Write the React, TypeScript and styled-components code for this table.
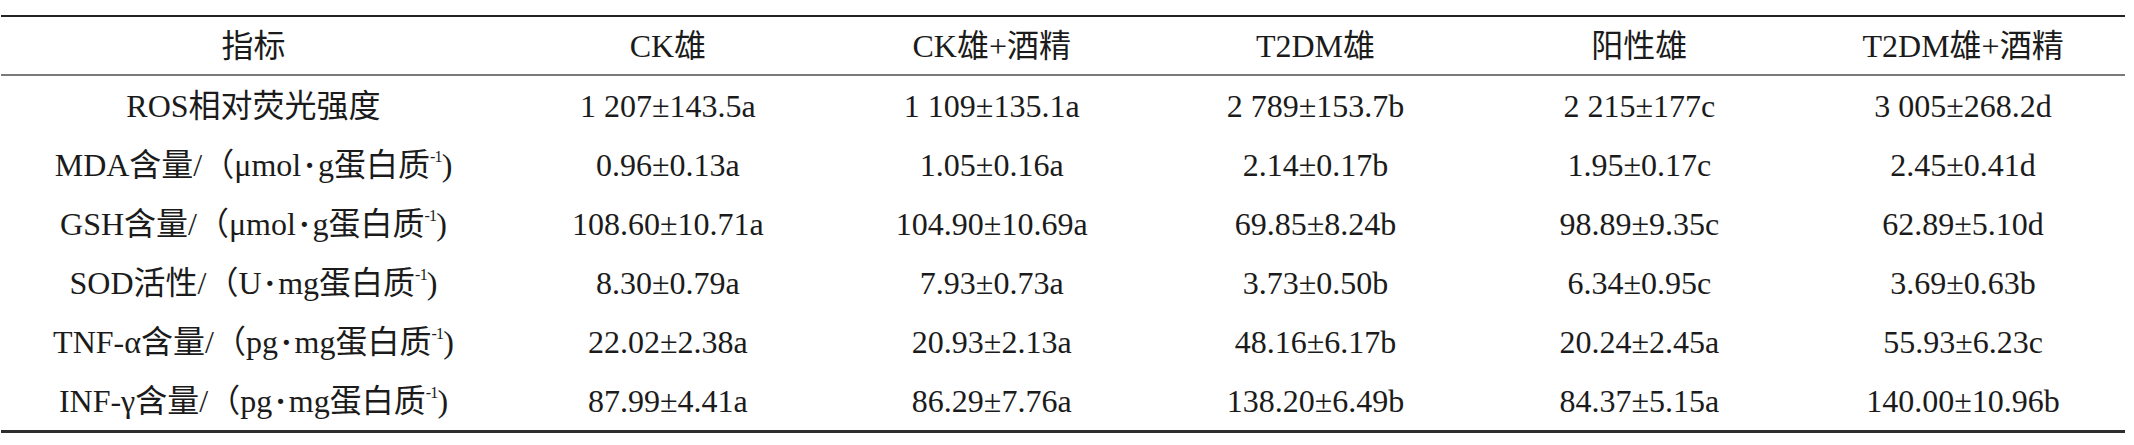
import React from "react";
import styled, { createGlobalStyle } from "styled-components";

const GlobalStyle = createGlobalStyle`
  html, body {
    margin: 0;
    padding: 0;
    background: #ffffff;
  }
  body {
    font-family: "Liberation Serif", "Noto Sans CJK SC", serif;
    color: #1b1b1b;
  }
`;

const Page = styled.div`
  padding: 15px 0 0 1px;
`;

const Table = styled.div`
  width: 2124px;
  border-top: 2px solid #232323;
  border-bottom: 3px solid #2e2e2e;
  font-size: 32px;
  line-height: 1;
`;

const Row = styled.div<{ $head?: boolean }>`
  display: grid;
  grid-template-columns: 505px repeat(5, 1fr);
  align-items: center;
  height: ${(p) => (p.$head ? "57px" : "59px")};
  border-bottom: ${(p) => (p.$head ? "2px solid #7a7a7a" : "none")};
`;

const Cell = styled.div`
  text-align: center;
  white-space: nowrap;
`;

const Sup = styled.sup`
  font-size: 0.5em;
  vertical-align: 0.85em;
  line-height: 0;
  letter-spacing: -0.05em;
`;

const Dot = styled.span`
  display: inline-block;
  padding: 0 3px;
  font-weight: bold;
`;

const headers = ["指标", "CK雄", "CK雄+酒精", "T2DM雄", "阳性雄", "T2DM雄+酒精"];

type Unit = { pre: string; a: string; b: string } | null;

const rows: { name: string; unit: Unit; values: string[] }[] = [
  {
    name: "ROS相对荧光强度",
    unit: null,
    values: ["1 207±143.5a", "1 109±135.1a", "2 789±153.7b", "2 215±177c", "3 005±268.2d"],
  },
  {
    name: "MDA含量/",
    unit: { pre: "（", a: "μmol", b: "g蛋白质" },
    values: ["0.96±0.13a", "1.05±0.16a", "2.14±0.17b", "1.95±0.17c", "2.45±0.41d"],
  },
  {
    name: "GSH含量/",
    unit: { pre: "（", a: "μmol", b: "g蛋白质" },
    values: ["108.60±10.71a", "104.90±10.69a", "69.85±8.24b", "98.89±9.35c", "62.89±5.10d"],
  },
  {
    name: "SOD活性/",
    unit: { pre: "（", a: "U", b: "mg蛋白质" },
    values: ["8.30±0.79a", "7.93±0.73a", "3.73±0.50b", "6.34±0.95c", "3.69±0.63b"],
  },
  {
    name: "TNF-α含量/",
    unit: { pre: "（", a: "pg", b: "mg蛋白质" },
    values: ["22.02±2.38a", "20.93±2.13a", "48.16±6.17b", "20.24±2.45a", "55.93±6.23c"],
  },
  {
    name: "INF-γ含量/",
    unit: { pre: "（", a: "pg", b: "mg蛋白质" },
    values: ["87.99±4.41a", "86.29±7.76a", "138.20±6.49b", "84.37±5.15a", "140.00±10.96b"],
  },
];

export default function App() {
  return (
    <>
      <GlobalStyle />
      <Page>
        <Table>
          <Row $head>
            {headers.map((h) => (
              <Cell key={h}>{h}</Cell>
            ))}
          </Row>
          {rows.map((r) => (
            <Row key={r.name}>
              <Cell>
                {r.name}
                {r.unit && (
                  <>
                    {r.unit.pre}
                    {r.unit.a}
                    <Dot>·</Dot>
                    {r.unit.b}
                    <Sup>-1</Sup>)
                  </>
                )}
              </Cell>
              {r.values.map((v, i) => (
                <Cell key={i}>{v}</Cell>
              ))}
            </Row>
          ))}
        </Table>
      </Page>
    </>
  );
}
